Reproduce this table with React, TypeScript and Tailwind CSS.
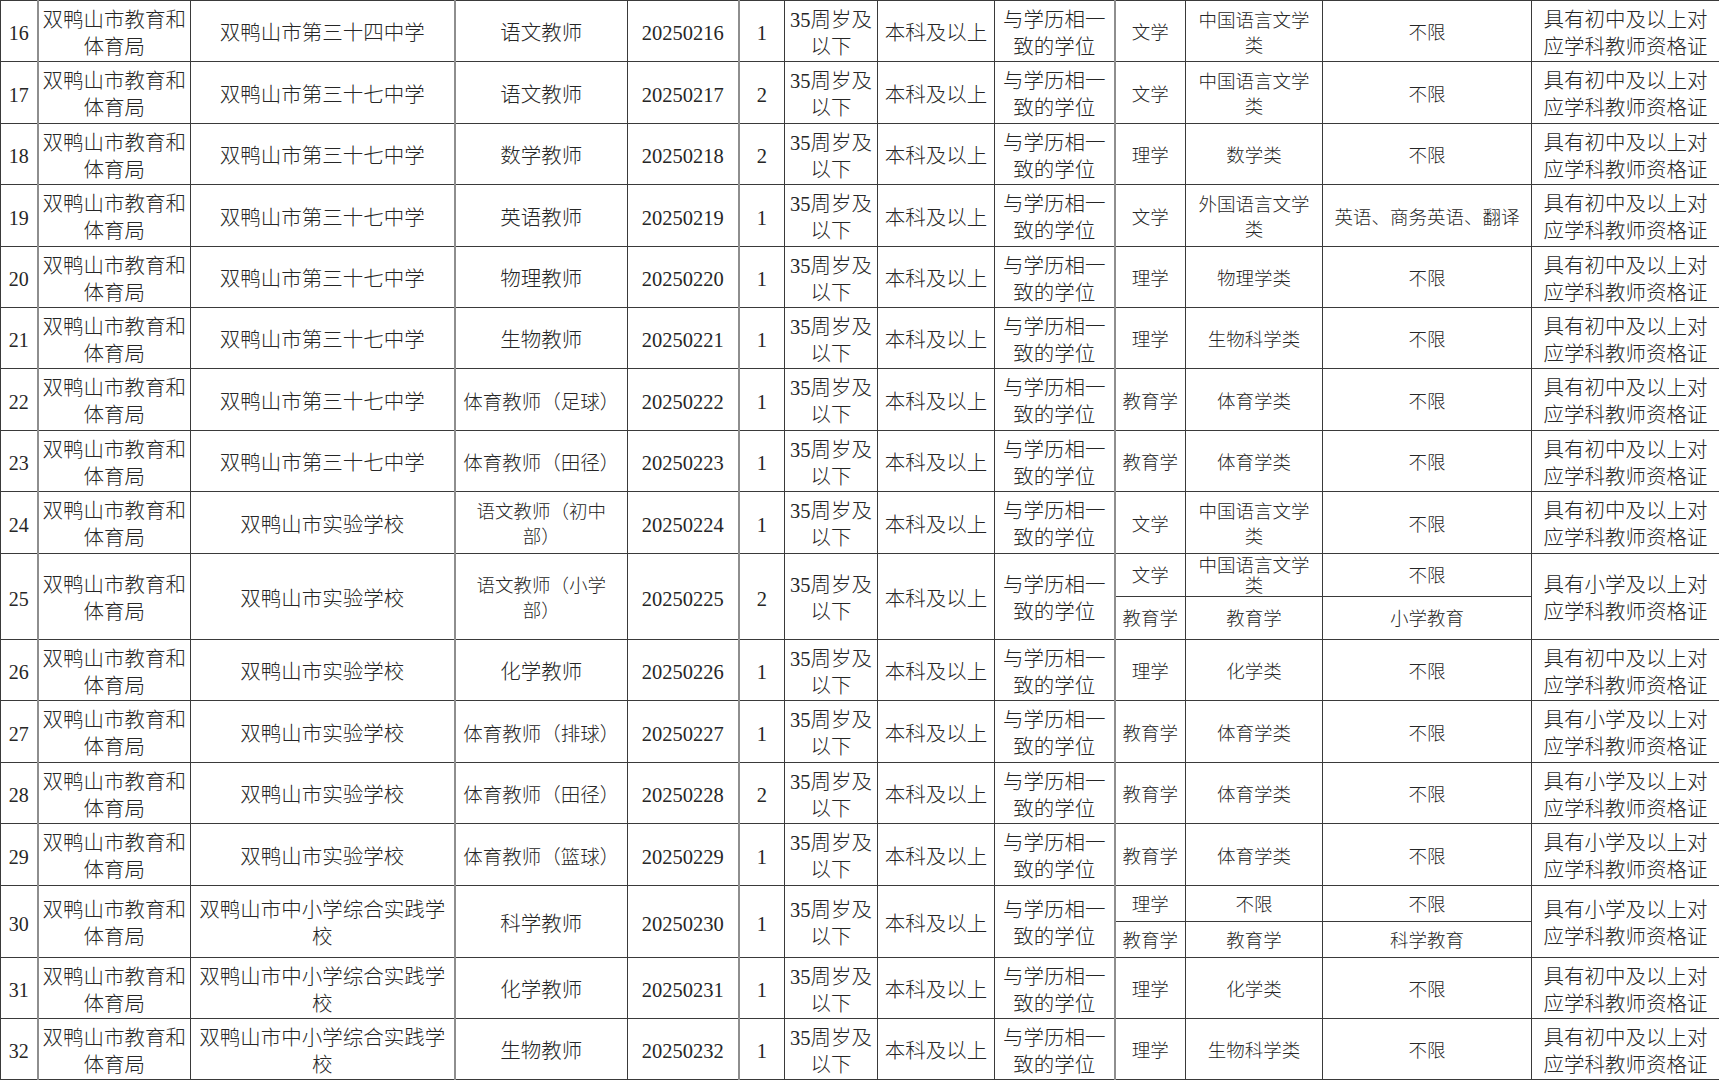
import React from "react";

type Sub = { deg: string; major: string; dir: string };
type Row = {
  n: number;
  school: string;
  post: string;
  postSize?: "md" | "sm";
  code: string;
  count: string;
  subs: Sub[];
  cert: string;
  h: number[];
};

const CZ = "具有初中及以上对/应学科教师资格证";
const XX = "具有小学及以上对/应学科教师资格证";
const S37 = "双鸭山市第三十七中学";
const SY = "双鸭山市实验学校";
const SZ = "双鸭山市中小学综合实践学/校";

const rows: Row[] = [
  { n: 16, school: "双鸭山市第三十四中学", post: "语文教师", code: "20250216", count: "1", subs: [{ deg: "文学", major: "中国语言文学/类", dir: "不限" }], cert: CZ, h: [61] },
  { n: 17, school: S37, post: "语文教师", code: "20250217", count: "2", subs: [{ deg: "文学", major: "中国语言文学/类", dir: "不限" }], cert: CZ, h: [62] },
  { n: 18, school: S37, post: "数学教师", code: "20250218", count: "2", subs: [{ deg: "理学", major: "数学类", dir: "不限" }], cert: CZ, h: [61] },
  { n: 19, school: S37, post: "英语教师", code: "20250219", count: "1", subs: [{ deg: "文学", major: "外国语言文学/类", dir: "英语、商务英语、翻译" }], cert: CZ, h: [62] },
  { n: 20, school: S37, post: "物理教师", code: "20250220", count: "1", subs: [{ deg: "理学", major: "物理学类", dir: "不限" }], cert: CZ, h: [61] },
  { n: 21, school: S37, post: "生物教师", code: "20250221", count: "1", subs: [{ deg: "理学", major: "生物科学类", dir: "不限" }], cert: CZ, h: [61] },
  { n: 22, school: S37, post: "体育教师（足球）", postSize: "md", code: "20250222", count: "1", subs: [{ deg: "教育学", major: "体育学类", dir: "不限" }], cert: CZ, h: [62] },
  { n: 23, school: S37, post: "体育教师（田径）", postSize: "md", code: "20250223", count: "1", subs: [{ deg: "教育学", major: "体育学类", dir: "不限" }], cert: CZ, h: [61] },
  { n: 24, school: SY, post: "语文教师（初中/部）", postSize: "sm", code: "20250224", count: "1", subs: [{ deg: "文学", major: "中国语言文学/类", dir: "不限" }], cert: CZ, h: [62] },
  {
    n: 25, school: SY, post: "语文教师（小学/部）", postSize: "sm", code: "20250225", count: "2",
    subs: [
      { deg: "文学", major: "中国语言文学/类", dir: "不限" },
      { deg: "教育学", major: "教育学", dir: "小学教育" },
    ],
    cert: XX, h: [43, 43],
  },
  { n: 26, school: SY, post: "化学教师", code: "20250226", count: "1", subs: [{ deg: "理学", major: "化学类", dir: "不限" }], cert: CZ, h: [61] },
  { n: 27, school: SY, post: "体育教师（排球）", postSize: "md", code: "20250227", count: "1", subs: [{ deg: "教育学", major: "体育学类", dir: "不限" }], cert: XX, h: [62] },
  { n: 28, school: SY, post: "体育教师（田径）", postSize: "md", code: "20250228", count: "2", subs: [{ deg: "教育学", major: "体育学类", dir: "不限" }], cert: XX, h: [61] },
  { n: 29, school: SY, post: "体育教师（篮球）", postSize: "md", code: "20250229", count: "1", subs: [{ deg: "教育学", major: "体育学类", dir: "不限" }], cert: XX, h: [62] },
  {
    n: 30, school: SZ, post: "科学教师", code: "20250230", count: "1",
    subs: [
      { deg: "理学", major: "不限", dir: "不限" },
      { deg: "教育学", major: "教育学", dir: "科学教育" },
    ],
    cert: XX, h: [36, 36],
  },
  { n: 31, school: SZ, post: "化学教师", code: "20250231", count: "1", subs: [{ deg: "理学", major: "化学类", dir: "不限" }], cert: CZ, h: [61] },
  { n: 32, school: SZ, post: "生物教师", code: "20250232", count: "1", subs: [{ deg: "理学", major: "生物科学类", dir: "不限" }], cert: CZ, h: [61] },
];

function Lines({ s }: { s: string }) {
  const parts = s.split("/");
  return (
    <>
      {parts.map((p, i) => (
        <React.Fragment key={i}>
          {i > 0 && <br />}
          {p}
        </React.Fragment>
      ))}
    </>
  );
}

const base = "border border-[#3a3a3a] px-0 pb-0 text-center align-middle";
const padTop = "pt-[5px]";
const grayL = "border-l-2 border-l-[#8e8e8e]";
const big = "text-[20.5px] leading-[27px]";
const small = "text-[18.5px] leading-[25px]";

export default function App() {
  return (
    <div className="w-[1719px] h-[1080px] bg-white overflow-hidden text-[#262626] font-light font-['Liberation_Serif','Noto_Sans_CJK_SC',serif]">
      <table className="table-fixed border-collapse w-[1719px]">
        <colgroup>
          <col className="w-[37px]" />
          <col className="w-[153px]" />
          <col className="w-[264px]" />
          <col className="w-[173px]" />
          <col className="w-[111px]" />
          <col className="w-[46px]" />
          <col className="w-[93px]" />
          <col className="w-[117px]" />
          <col className="w-[120px]" />
          <col className="w-[71px]" />
          <col className="w-[137px]" />
          <col className="w-[209px]" />
          <col className="w-[188px]" />
        </colgroup>
        <tbody>
          {rows.map((r) => {
            const span = r.subs.length;
            const tight = span > 1;
            const subCls = tight ? "text-[18.5px] leading-[20px] pt-[2px]" : `${small} ${padTop}`;
            const postCls =
              r.postSize === "sm" ? small : r.postSize === "md" ? "text-[19.5px] leading-[27px]" : big;
            const subCells = (s: Sub) => (
              <>
                <td className={`${base} ${grayL} ${subCls}`}>
                  <Lines s={s.deg} />
                </td>
                <td className={`${base} ${subCls}`}>
                  <Lines s={s.major} />
                </td>
                <td className={`${base} ${subCls}`}>
                  <Lines s={s.dir} />
                </td>
              </>
            );
            return (
              <React.Fragment key={r.n}>
                <tr style={{ height: r.h[0] }}>
                  <td rowSpan={span} className={`${base} ${padTop} text-[20px] leading-[27px]`}>
                    {r.n}
                  </td>
                  <td rowSpan={span} className={`${base} ${padTop} ${grayL} ${big}`}>
                    <Lines s="双鸭山市教育和/体育局" />
                  </td>
                  <td rowSpan={span} className={`${base} ${padTop} ${big}`}>
                    <Lines s={r.school} />
                  </td>
                  <td rowSpan={span} className={`${base} ${padTop} ${grayL} ${postCls}`}>
                    <Lines s={r.post} />
                  </td>
                  <td rowSpan={span} className={`${base} ${padTop} ${big}`}>
                    {r.code}
                  </td>
                  <td rowSpan={span} className={`${base} ${padTop} ${grayL} ${big}`}>
                    {r.count}
                  </td>
                  <td rowSpan={span} className={`${base} ${padTop} ${big}`}>
                    <Lines s="35周岁及/以下" />
                  </td>
                  <td rowSpan={span} className={`${base} ${padTop} ${big}`}>
                    本科及以上
                  </td>
                  <td rowSpan={span} className={`${base} ${padTop} ${big}`}>
                    <Lines s="与学历相一/致的学位" />
                  </td>
                  {subCells(r.subs[0])}
                  <td rowSpan={span} className={`${base} ${padTop} ${big}`}>
                    <Lines s={r.cert} />
                  </td>
                </tr>
                {span > 1 && <tr style={{ height: r.h[1] }}>{subCells(r.subs[1])}</tr>}
              </React.Fragment>
            );
          })}
        </tbody>
      </table>
    </div>
  );
}
